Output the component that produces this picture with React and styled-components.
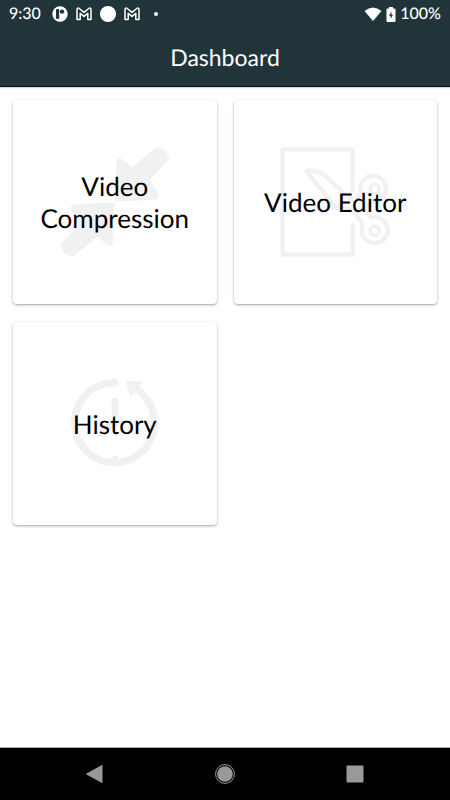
import React from 'react';
import styled, { createGlobalStyle } from 'styled-components';

const GlobalStyle = createGlobalStyle`
  * {
    box-sizing: border-box;
  }

  body {
    margin: 0;
    background: white;
    font-family: Lato, 'Liberation Sans', sans-serif;
    text-rendering: geometricPrecision;
  }
`;

const Screen = styled.div`
  min-height: 100vh;
  display: flex;
  flex-direction: column;
`;

const Header = styled.header`
  background: #213439;
  color: white;
  border-bottom: 1px solid #0e0b20;
  box-shadow: 0 1px 1px #d9cfe0;
`;

const StatusBar = styled.div`
  height: 28px;
  padding: 0 9px;
  display: flex;
  align-items: center;
  justify-content: space-between;
  font-size: 16px;
  font-weight: 500;
  line-height: 20px;
`;

const StatusGroup = styled.div`
  display: flex;
  align-items: center;
  gap: ${props => props.$gap}px;

  svg {
    display: block;
  }
`;

const Notifications = styled(StatusGroup)`
  margin-left: 3px;
`;

const Title = styled.h1`
  margin: 0;
  height: 58px;
  display: flex;
  align-items: center;
  justify-content: center;
  font-size: 23px;
  font-weight: 400;
`;

const CardGrid = styled.main`
  flex: 1;
  padding: 13px;
  display: grid;
  grid-template-columns: 1fr 1fr;
  align-content: start;
  gap: 18px 17px;
`;

const Card = styled.button`
  aspect-ratio: 1;
  border: 0;
  border-radius: 4px;
  padding: 0 16px;
  background: white;
  box-shadow: 0 1px 3px rgba(0, 0, 0, 0.3), 0 1px 1px rgba(0, 0, 0, 0.08);
  color: black;
  cursor: pointer;
  display: grid;
  place-items: center;
  font-family: inherit;
  font-size: 26px;
  line-height: 32px;
  text-rendering: inherit;

  > * {
    grid-area: 1 / 1;
  }
`;

const CardLabel = styled.span`
  padding-top: 1px;
`;

const CardArt = styled.svg`
  width: 110px;
  height: 110px;
  fill: none;
  stroke: #f1f1f1;
  stroke-linecap: round;
  stroke-linejoin: round;
`;

const NavBar = styled.nav`
  height: 53px;
  padding: 0 30px;
  display: grid;
  grid-template-columns: repeat(3, 1fr);
  background: black;
  border-top: 1px solid #aaa;
`;

const NavButton = styled.button`
  border: 0;
  padding: 0;
  background: transparent;
  color: #999;
  cursor: pointer;
  display: flex;
  align-items: center;
  justify-content: center;
`;

function MailIcon() {
  return (
    <svg width="16" height="14" viewBox="0 0 16 14" fill="none" stroke="white" strokeWidth="1.5" strokeLinejoin="round">
      <path d="M1 12.5V2.3C1 1 2.4.8 3.2 1.5L8 5.3l4.8-3.8C13.6.8 15 1 15 2.3v10.2h-3.2V6.4L8 9.4l-3.8-3v6.1z" />
    </svg>
  );
}

function CompressArt() {
  const arrow = 'M448 176Q456 170 464 174Q484 182 491 200Q494 208 488 214L435 268L460 311Q466 324 452 328Q395 334 330 334L335 214Q337 200 350 207L382 232Z';
  return (
    <CardArt viewBox="165 171 330 330" aria-hidden="true">
      <g fill="#f1f1f1" stroke="none">
        <path d={arrow} />
        <path d={arrow} transform="rotate(180 329 336)" />
      </g>
    </CardArt>
  );
}

function EditorArt() {
  return (
    <CardArt viewBox="157 171 330 330" strokeWidth="13" aria-hidden="true">
      <path d="M375 303V178H165V494H375V406" />
      <path d="M381 330L400 311A39 39 0 1 1 433 335L411 355L431 383A39 39 0 1 1 403 413V397L374 362Q335 362 316 343L236 243Q270 239 293 258L381 338" />
      <path d="M296 355H374" strokeWidth="8" />
      <circle cx="441" cy="297" r="14" strokeWidth="10" />
      <circle cx="441" cy="422" r="14" strokeWidth="10" />
    </CardArt>
  );
}

function HistoryArt() {
  return (
    <CardArt viewBox="165 159 330 330" strokeWidth="22" aria-hidden="true">
      <path d="M330 203A120 120 0 1 0 395 223" />
      <path d="M330 258V326L288 354" strokeWidth="20" />
      <path d="M330 432V440" strokeWidth="20" />
      <path d="M362 197L414 199L396 222L376 245Z" fill="#f1f1f1" stroke="none" />
    </CardArt>
  );
}

const CARDS = [
  { label: 'Video Compression', Art: CompressArt },
  { label: 'Video Editor', Art: EditorArt },
  { label: 'History', Art: HistoryArt },
];

export default function App() {
  return (
    <Screen>
      <GlobalStyle />
      <Header>
        <StatusBar>
          <StatusGroup $gap={8}>
            <span>9:30</span>
            <Notifications $gap={8}>
              <svg width="16" height="16" viewBox="0 0 16 16">
                <circle cx="8" cy="8" r="7.7" fill="white" />
                <rect x="4" y="3" width="3.2" height="10" rx="1.2" fill="#213439" />
                <circle cx="10" cy="5.6" r="2.2" fill="#213439" />
              </svg>
              <MailIcon />
              <svg width="16" height="16" viewBox="0 0 16 16">
                <circle cx="8" cy="8" r="8" fill="white" />
              </svg>
              <MailIcon />
              <svg width="16" height="16" viewBox="0 0 16 16">
                <circle cx="8" cy="8" r="2" fill="white" />
              </svg>
            </Notifications>
          </StatusGroup>
          <StatusGroup $gap={4}>
            <svg width="18" height="14" viewBox="0 0 18 14">
              <path d="M.5 4Q9-3 17.5 4L9 14z" fill="white" />
            </svg>
            <svg width="10" height="15" viewBox="0 0 10 15">
              <path d="M3 0h4v1.5h1.5q1 0 1 1V14q0 1-1 1h-7q-1 0-1-1V2.5q0-1 1-1H3z" fill="white" />
              <path d="M5.5 4.5L3 8.8h1.6V12L7 7.8H5.5z" fill="#213439" />
            </svg>
            <span>100%</span>
          </StatusGroup>
        </StatusBar>
        <Title>Dashboard</Title>
      </Header>

      <CardGrid>
        {CARDS.map(({ label, Art }) => (
          <Card key={label} type="button">
            <Art />
            <CardLabel>{label}</CardLabel>
          </Card>
        ))}
      </CardGrid>

      <NavBar>
        <NavButton type="button" aria-label="Back">
          <svg width="18" height="18" viewBox="0 0 18 18">
            <path d="M16 .5v17L.5 9z" fill="currentColor" stroke="currentColor" strokeLinejoin="round" />
          </svg>
        </NavButton>
        <NavButton type="button" aria-label="Home">
          <svg width="20" height="20" viewBox="0 0 20 20">
            <circle cx="10" cy="10" r="9.4" fill="none" stroke="currentColor" />
            <circle cx="10" cy="10" r="7.8" fill="currentColor" />
          </svg>
        </NavButton>
        <NavButton type="button" aria-label="Recent apps">
          <svg width="18" height="18" viewBox="0 0 18 18">
            <rect x="0.5" y="0.5" width="17" height="17" rx="1" fill="currentColor" />
          </svg>
        </NavButton>
      </NavBar>
    </Screen>
  );
}
